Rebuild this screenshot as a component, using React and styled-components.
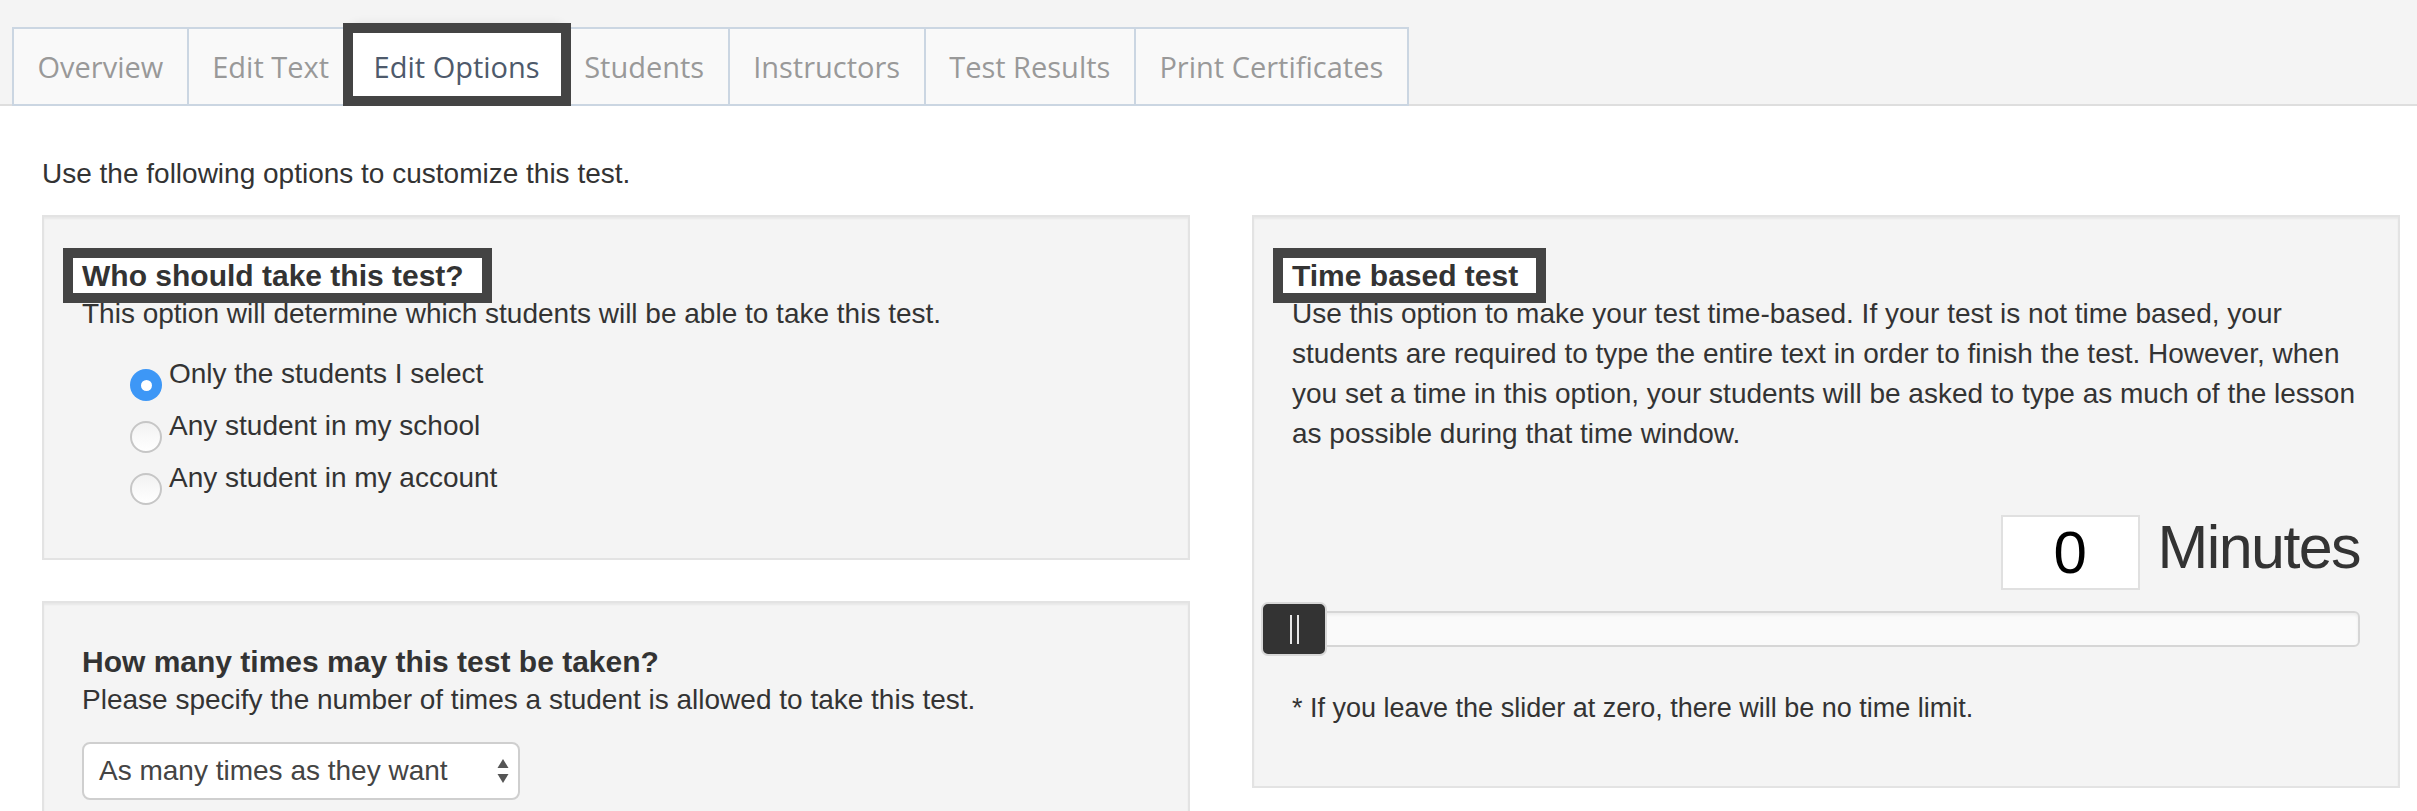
import React, { useState } from 'react';
import styled, { createGlobalStyle } from 'styled-components';

const GlobalStyle = createGlobalStyle`
  * {
    box-sizing: border-box;
  }
  html, body {
    margin: 0;
    padding: 0;
    background: #fff;
  }
  body {
    font-family: "Liberation Sans", Arial, sans-serif;
    color: #333;
  }
`;

const Page = styled.div`
  width: 2417px;
  min-height: 811px;
  overflow: hidden;
`;

const TabBar = styled.nav`
  display: flex;
  align-items: flex-end;
  height: 106px;
  padding-left: 14px;
  background: #f4f4f4;
  box-shadow: inset 0 -2px 0 #dedede;
`;

const Tab = styled.div`
  position: relative;
  z-index: ${(p) => (p.$active ? 2 : 1)};
  display: flex;
  align-items: center;
  height: ${(p) => (p.$active ? '63px' : '79px')};
  margin: ${(p) => (p.$active ? '0 0 10px -2px' : '0 0 0 -2px')};
  padding: ${(p) => (p.$active ? '3px 19px 0' : '0 23.5px')};
  font-family: "Open Sans", sans-serif;
  font-size: 29px;
  white-space: nowrap;
  color: ${(p) => (p.$active ? '#4e5a6b' : '#999')};
  background: ${(p) => (p.$active ? '#fff' : '#f9f9f9')};
  border: 2px solid ${(p) => (p.$active ? '#fff' : '#cbd6e2')};
  outline: ${(p) => (p.$active ? '10px solid #444' : 'none')};
  box-shadow: ${(p) => (p.$active ? '0 -8px 10px rgba(0, 0, 0, 0.12)' : 'none')};
  cursor: pointer;
`;

const Content = styled.main`
  padding: 48px 17px 0 42px;
`;

const Intro = styled.p`
  margin: 0 0 21px;
  font-size: 28px;
  line-height: 40px;
`;

const Columns = styled.div`
  display: grid;
  grid-template-columns: 1148px 1148px;
  column-gap: 62px;
  align-items: start;
`;

const Stack = styled.div`
  display: flex;
  flex-direction: column;
  gap: 41px;
`;

const Well = styled.section`
  background: #f4f4f4;
  border: 2px solid #e3e3e3;
  box-shadow: inset 0 2px 2px rgba(0, 0, 0, 0.05);
  padding: 41px 38px ${(p) => p.$bottom || '40px'};
`;

const Heading = styled.h3`
  display: ${(p) => (p.$marked ? 'inline-block' : 'block')};
  margin: 0 0 0 ${(p) => (p.$marked ? '-9px' : '0')};
  padding: ${(p) => (p.$marked ? '0 18px 0 9px' : '0')};
  font-size: 30px;
  font-weight: bold;
  line-height: 35px;
  color: #333;
  background: ${(p) => (p.$marked ? '#fff' : 'transparent')};
  outline: ${(p) => (p.$marked ? '10px solid #444' : 'none')};
`;

const Text = styled.p`
  margin: 1px 0 0;
  font-size: 28px;
  line-height: 40px;
  color: #333;
`;

const RadioList = styled.div`
  display: flex;
  flex-direction: column;
  gap: 12px;
  margin-top: 20px;
  padding-left: 48px;
`;

const RadioRow = styled.label`
  display: flex;
  align-items: flex-start;
  gap: 7px;
  height: 40px;
  font-size: 28px;
  line-height: 40px;
  color: #333;
  cursor: pointer;
`;

const RadioDot = styled.span`
  flex: none;
  display: flex;
  align-items: center;
  justify-content: center;
  width: 32px;
  height: 32px;
  margin-top: 15px;
  border-radius: 50%;
  background: ${(p) => (p.$checked ? '#3d97f6' : 'linear-gradient(#f2f2f2, #fff)')};
  border: ${(p) => (p.$checked ? 'none' : '2px solid #c6c6c6')};

  &::after {
    content: '';
    display: ${(p) => (p.$checked ? 'block' : 'none')};
    width: 11px;
    height: 11px;
    border-radius: 50%;
    background: #fff;
  }
`;

const SelectBox = styled.div`
  display: flex;
  align-items: center;
  justify-content: space-between;
  width: 438px;
  height: 58px;
  margin-top: 22px;
  padding: 0 9px 0 15px;
  background: #fff;
  border: 2px solid #cfcfcf;
  border-radius: 8px;
  font-size: 28px;
  color: #444;
`;

const MinutesRow = styled.div`
  display: flex;
  justify-content: flex-end;
  align-items: flex-start;
  gap: 18px;
  margin-top: 61px;
`;

const MinutesInput = styled.input`
  width: 139px;
  height: 75px;
  padding: 0;
  border: 2px solid #e0e0e0;
  background: #fff;
  font-family: "Liberation Sans", Arial, sans-serif;
  font-size: 60px;
  line-height: 1;
  text-align: center;
  color: #000;
  outline: none;
`;

const MinutesLabel = styled.span`
  margin-top: 2px;
  font-size: 61px;
  line-height: 61px;
  letter-spacing: -1.6px;
  color: #333;
`;

const Slider = styled.div`
  position: relative;
  display: flex;
  align-items: center;
  height: 54px;
  margin: 12px 0 0 -31px;
`;

const Track = styled.div`
  flex: 1;
  height: 36px;
  background: #fafafa;
  border: 2px solid #d6d6d6;
  border-radius: 6px;
  box-shadow: inset 0 2px 3px rgba(0, 0, 0, 0.06);
`;

const Handle = styled.div`
  position: absolute;
  left: ${(p) => p.$left}px;
  top: 0;
  display: flex;
  justify-content: center;
  align-items: center;
  gap: 5px;
  width: 66px;
  height: 54px;
  background: #333;
  border: 2px solid #d8d8d8;
  border-radius: 7px;

  span {
    width: 2px;
    height: 29px;
    background: #e8e8e8;
  }
`;

const Note = styled.p`
  margin: 32px 0 0;
  font-size: 27px;
  line-height: 40px;
  color: #333;
`;

const tabs = ['Overview', 'Edit Text', 'Edit Options', 'Students', 'Instructors', 'Test Results', 'Print Certificates'];

const audience = ['Only the students I select', 'Any student in my school', 'Any student in my account'];

const SelectArrows = () => (
  <svg width="12" height="26" viewBox="0 0 12 26">
    <path d="M6 1 L11.5 10 L0.5 10 Z" fill="#555" />
    <path d="M6 25 L11.5 16 L0.5 16 Z" fill="#555" />
  </svg>
);

export default function App() {
  const [active, setActive] = useState('Edit Options');
  const [who, setWho] = useState(0);
  const [minutes] = useState(0);

  return (
    <Page>
      <GlobalStyle />
      <TabBar>
        {tabs.map((t) => (
          <Tab key={t} $active={t === active} onClick={() => setActive(t)}>
            {t}
          </Tab>
        ))}
      </TabBar>

      <Content>
        <Intro>Use the following options to customize this test.</Intro>
        <Columns>
          <Stack>
            <Well $bottom="60px">
              <Heading $marked>Who should take this test?</Heading>
              <Text>This option will determine which students will be able to take this test.</Text>
              <RadioList>
                {audience.map((a, i) => (
                  <RadioRow key={a} onClick={() => setWho(i)}>
                    <RadioDot $checked={who === i} />
                    {a}
                  </RadioRow>
                ))}
              </RadioList>
            </Well>

            <Well>
              <Heading>How many times may this test be taken?</Heading>
              <Text>Please specify the number of times a student is allowed to take this test.</Text>
              <SelectBox>
                As many times as they want
                <SelectArrows />
              </SelectBox>
            </Well>
          </Stack>

          <Well $bottom="58px">
            <Heading $marked>Time based test</Heading>
            <Text>
              Use this option to make your test time-based. If your test is not time based, your students are
              required to type the entire text in order to finish the test. However, when you set a time in this
              option, your students will be asked to type as much of the lesson as possible during that time window.
            </Text>
            <MinutesRow>
              <MinutesInput value={minutes} readOnly />
              <MinutesLabel>Minutes</MinutesLabel>
            </MinutesRow>
            <Slider>
              <Track />
              <Handle $left={0}>
                <span />
                <span />
              </Handle>
            </Slider>
            <Note>* If you leave the slider at zero, there will be no time limit.</Note>
          </Well>
        </Columns>
      </Content>
    </Page>
  );
}
